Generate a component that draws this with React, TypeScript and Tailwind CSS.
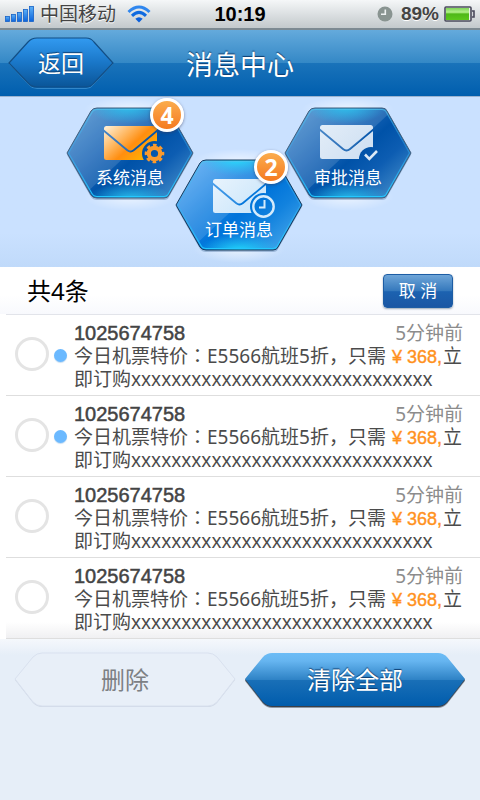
import type { ReactNode } from "react";

const HEX =
  "M1 46 L25 4 Q27 1 31 1 H98 Q102 1 103 4 L127 46 L103 88 Q102 91 98 91 H31 Q27 91 25 88 Z";
const HEX_INNER =
  "M2.5 46 L26.5 4.5 Q28 2.5 31 2.5 H98 Q100.5 2.5 102 4.5 L125.5 46 L102 87.5 Q100.5 89.5 98 89.5 H31 Q28 89.5 26.5 87.5 Z";

type Tab = {
  id: string;
  label: string;
  count?: number;
  active?: boolean;
  envelope: [number, number];
  cut: [number, number, number];
  badge: ReactNode;
};

const tabs: Tab[] = [
  {
    id: "system",
    label: "系统消息",
    count: 4,
    envelope: [38, 19],
    cut: [88.5, 46.5, 12.5],
    badge: (
      <g fill="none" stroke="#fb9a2c">
        <circle cx="88.5" cy="46.5" r="5.7" strokeWidth="4.2" />
        <circle cx="88.5" cy="46.5" r="8.4" strokeWidth="2.8" strokeDasharray="3.6 3" strokeDashoffset="1.8" />
      </g>
    ),
  },
  {
    id: "order",
    label: "订单消息",
    count: 2,
    active: true,
    envelope: [38, 20],
    cut: [88.5, 47.5, 13.5],
    badge: (
      <g fill="none" stroke="#d5ebfb" strokeWidth="2.4">
        <circle cx="88.5" cy="47.5" r="10.2" />
        <path d="M89.5 41 V48.5 H84" strokeWidth="2" />
      </g>
    ),
  },
  {
    id: "approval",
    label: "审批消息",
    envelope: [36, 18],
    cut: [87, 52, 12],
    badge: <path d="M81 47.5 L85.3 51.8 L93 44" fill="none" stroke="#dbe9f6" strokeWidth="2.6" />,
  },
];

function HexArt({ tab }: { tab: Tab }) {
  const { id, active, envelope, cut, badge } = tab;
  const [x, y] = envelope;
  const url = (name: string) => `url(#${id}-${name})`;
  return (
    <svg viewBox="0 0 128 92" className="absolute inset-0 h-full w-full overflow-visible" aria-hidden="true">
      <defs>
        <linearGradient id={`${id}-body`} x1="0" y1="0.1" x2="1" y2="0.9">
          <stop offset="0" stopColor={active ? "#5cacf4" : "#4f92cf"} />
          <stop offset="0.35" stopColor={active ? "#1f86e2" : "#1e68b8"} />
          <stop offset="0.55" stopColor={active ? "#0074da" : "#0052a8"} />
          <stop offset="0.72" stopColor={active ? "#1282de" : "#0d5db2"} />
          <stop offset="1" stopColor={active ? "#4aaaec" : "#4a92cc"} />
        </linearGradient>
        <radialGradient id={`${id}-glow`}>
          <stop offset="0" stopColor={active ? "#22e4ff" : "#2cc4ee"} stopOpacity="0.9" />
          <stop offset="1" stopColor="#22c8f8" stopOpacity="0" />
        </radialGradient>
        <radialGradient id={`${id}-halo`}>
          <stop offset="0" stopColor="#fff" stopOpacity="0.6" />
          <stop offset="1" stopColor="#fff" stopOpacity="0" />
        </radialGradient>
        <linearGradient id={`${id}-rim`} x1="0" y1="0" x2="0" y2="1">
          <stop offset="0" stopColor="#4fc4ee" stopOpacity="0.7" />
          <stop offset="0.4" stopColor="#3ab0f0" stopOpacity="0.4" />
          <stop offset="1" stopColor="#22c8ff" />
        </linearGradient>
        <linearGradient id={`${id}-paper`} x1="0" y1="0" x2="1" y2="0.7">
          {id === "system" ? (
            <>
              <stop offset="0" stopColor="#fff3dc" />
              <stop offset="0.4" stopColor="#ffb45a" />
              <stop offset="0.62" stopColor="#ff8e10" />
              <stop offset="1" stopColor="#ffb400" />
            </>
          ) : (
            <>
              <stop offset="0" stopColor={active ? "#e8f3fd" : "#e3edf8"} />
              <stop offset="1" stopColor={active ? "#cbe6fa" : "#cfe0f2"} />
            </>
          )}
        </linearGradient>
        <clipPath id={`${id}-clip`}>
          <path d={HEX} />
        </clipPath>
        <mask id={`${id}-mask`} maskUnits="userSpaceOnUse" x="0" y="0" width="128" height="92">
          <rect width="128" height="92" fill="#fff" />
          <path
            d={`M${x - 1} ${y + 4} L${x + 23} ${y + 24} Q${x + 26.5} ${y + 27} ${x + 30} ${y + 24} L${x + 54} ${y + 4}`}
            fill="none"
            stroke="#000"
            strokeWidth="1.8"
          />
          <circle cx={cut[0]} cy={cut[1]} r={cut[2]} fill="#000" />
        </mask>
      </defs>
      <ellipse cx="64" cy="2" rx="46" ry="12" fill={url("halo")} />
      <ellipse cx="64" cy="90" rx="46" ry="14" fill={url("halo")} />
      <path d={HEX} transform="translate(0 2)" fill="#3b6591" opacity="0.35" />
      <path d={HEX} fill={url("body")} />
      <g clipPath={url("clip")}>
        <path d="M0 0 H112 L18 88 L0 92 Z" fill="#fff" opacity="0.13" />
        <ellipse cx="62" cy="0" rx="40" ry="17" fill={url("glow")} />
        <ellipse cx="64" cy="92" rx="42" ry="17" fill={url("glow")} />
      </g>
      <path d={HEX_INNER} fill="none" stroke={url("rim")} strokeWidth="1.2" />
      <path d={HEX} fill="none" stroke={active ? "#153a5c" : "#41607e"} strokeWidth="1" />
      <rect x={x} y={y} width="53" height="34" rx="2.5" fill={url("paper")} mask={url("mask")} />
      {badge}
    </svg>
  );
}

function TabButton({ tab, className }: { tab: Tab; className: string }) {
  return (
    <button
      type="button"
      className={`relative h-[92px] w-32 shrink-0 pt-[50px] text-center text-[17px] leading-6 text-white ${className}`}
    >
      <HexArt tab={tab} />
      <span className="relative block">{tab.label}</span>
      {tab.count && (
        <span
          className={`absolute -top-[9px] flex size-[34px] items-center justify-center rounded-full border-[3px] border-white bg-linear-to-b from-[#fbac4c] to-[#f47a20] font-['Open_Sans','Noto_Sans',sans-serif] text-[23px] leading-none font-bold shadow-[0_1px_3px_rgba(60,60,90,0.6)] ${
            tab.active ? "left-[79px]" : "left-[84px]"
          }`}
        >
          {tab.count}
        </span>
      )}
    </button>
  );
}

const messages = [
  { id: 1, unread: true },
  { id: 2, unread: true },
  { id: 3, unread: false },
  { id: 4, unread: false },
];

function Message({ id, unread }: { id: number; unread: boolean }) {
  return (
    <li className="flex items-center border-b border-[#dedede] pt-[7px] pr-[17px] pb-1 pl-[9px]">
      <input
        id={`message-${id}`}
        type="checkbox"
        className="mb-[6px] size-[34px] shrink-0 appearance-none rounded-full border-3 border-[#e4e4e4] bg-white checked:bg-[#6bb8fb]"
      />
      <span
        className={`mr-[7px] mb-[2px] ml-[5px] size-[13px] shrink-0 rounded-full ${
          unread ? "bg-[#6bb9ff] shadow-[0_1px_1px_#c5dcf0]" : ""
        }`}
      />
      <label htmlFor={`message-${id}`} className="block min-w-0 flex-1 text-[19px] leading-[23px] text-[#4b4b4b]">
        <span className="flex justify-between">
          <span className="font-['Liberation_Sans',sans-serif] text-[20px] text-[#444] [-webkit-text-stroke:0.5px_#444]">
            1025674758
          </span>
          <span className="text-[#8c8c8c]">5分钟前</span>
        </span>
        <span className="block">
          今日机票特价<span className="font-['Noto_Sans','Noto_Sans_CJK_JP',sans-serif]">：</span>E5566航班5折，只需
          <span className="mr-px ml-[6px] font-['Liberation_Sans',sans-serif] text-[18px] leading-none text-[#ff921e] [-webkit-text-stroke:0.4px_#ff921e]">
            ¥&nbsp;368,
          </span>
          立
        </span>
        <span className="block">即订购xxxxxxxxxxxxxxxxxxxxxxxxxxxxxx</span>
      </label>
    </li>
  );
}

function StatusBar() {
  return (
    <div className="grid h-[30px] grid-cols-[1fr_auto_1fr] items-center border-b-2 border-[#7d8a92] bg-linear-to-b from-[#f5f7f8] to-[#c3c9cc] px-[5px] font-['Liberation_Sans','Noto_Sans_CJK_SC',sans-serif]">
      <div className="flex items-center">
        <svg viewBox="0 0 29 16" className="mr-[6px] h-4 w-[29px]" aria-hidden="true">
          <defs>
            <linearGradient id="signal" x1="0" y1="0" x2="0" y2="1">
              <stop offset="0" stopColor="#5cb0f6" />
              <stop offset="1" stopColor="#0a63dc" />
            </linearGradient>
          </defs>
          <g fill="url(#signal)" stroke="#1662c8" strokeWidth="0.8">
            <rect x="0.5" y="10.5" width="4" height="5" />
            <rect x="6.5" y="8.5" width="4" height="7" />
            <rect x="12.5" y="6.5" width="4" height="9" />
            <rect x="18.5" y="3.5" width="4" height="12" />
            <rect x="24.5" y="0.5" width="4" height="15" />
          </g>
        </svg>
        <span className="pt-[2px] text-[19px] leading-6 text-[#444] [text-shadow:0_1px_0_#fff]">中国移动</span>
        <svg viewBox="0 0 24 18" className="ml-[11px] h-[18px] w-6" aria-hidden="true">
          <g fill="none" stroke="#0f6ae0" strokeWidth="3">
            <path d="M1.5 7 Q12 -3 22.5 7" stroke="#2f86ee" />
            <path d="M5 10.8 Q12 4 19 10.8" />
          </g>
          <path d="M12 17.5 L8.3 13.8 Q12 10.8 15.7 13.8 Z" fill="#0a5fdc" />
        </svg>
      </div>
      <span className="text-[20px] leading-6 font-bold text-black">10:19</span>
      <div className="flex items-center justify-end">
        <svg viewBox="0 0 16 16" className="mr-2 size-4" aria-hidden="true">
          <circle cx="8" cy="8" r="7.5" fill="#899491" />
          <path d="M8.3 3.5 V8.3 H4" fill="none" stroke="#eef1f2" strokeWidth="1.6" />
        </svg>
        <span className="mr-[5px] text-[19px] leading-6 font-bold text-[#444] [text-shadow:0_1px_0_#fff]">89%</span>
        <svg viewBox="0 0 31 16" className="h-4 w-[31px]" aria-hidden="true">
          <defs>
            <linearGradient id="battery" x1="0" y1="0" x2="0" y2="1">
              <stop offset="0" stopColor="#7fd35a" />
              <stop offset="0.35" stopColor="#b4f28a" />
              <stop offset="0.5" stopColor="#4fb818" />
              <stop offset="1" stopColor="#5cc81c" />
            </linearGradient>
          </defs>
          <rect x="1" y="1" width="26" height="14" rx="1" fill="#e8f4e4" stroke="#4a4a5c" strokeWidth="1.6" />
          <rect x="2" y="2" width="23" height="12" fill="url(#battery)" />
          <path d="M28 5 H30 V11 H28" fill="#d5d9dc" stroke="#4a4a5c" strokeWidth="1.6" />
        </svg>
      </div>
    </div>
  );
}

function Header() {
  return (
    <header className="grid h-[66px] grid-cols-[1fr_auto_1fr] items-center bg-[linear-gradient(#64aadc_0%,#3488c6_50%,#1a73ba_50%,#005eae_100%)] px-2">
      <button
        type="button"
        className="relative h-[52px] w-[106px] text-[23px] leading-8 text-white [text-shadow:0_-1px_1px_#0d3d70]"
      >
        <svg viewBox="0 0 106 52" className="absolute inset-0 h-full w-full" aria-hidden="true">
          <defs>
            <linearGradient id="back" x1="0" y1="0" x2="0" y2="1">
              <stop offset="0" stopColor="#329af0" />
              <stop offset="0.5" stopColor="#1a77c8" />
              <stop offset="1" stopColor="#0a5598" />
            </linearGradient>
          </defs>
          <path
            d="M1.5 26 L20 5 Q23.5 1.5 29 1.5 H78 Q83 1.5 86 5 L104.5 26 L86 46 Q83 50.5 78 50.5 H29 Q23.5 50.5 20 46 Z"
            fill="none"
            stroke="#4fa0dc"
            strokeWidth="1"
            transform="translate(0 1)"
            opacity="0.6"
          />
          <path
            d="M1 26 L20 5 Q23.5 1 29 1 H78 Q83 1 86 5 L105 26 L86 46 Q83 50 78 50 H29 Q23.5 50 20 46 Z"
            fill="url(#back)"
            stroke="#134f86"
            strokeWidth="1.2"
          />
        </svg>
        <span className="relative">返回</span>
      </button>
      <h1 className="pt-1 text-[27px] leading-10 text-white [text-shadow:0_-1px_1px_#0d3d70]">消息中心</h1>
    </header>
  );
}

const WIDE_HEX =
  "M1 27 L19 5 Q23 1 28 1 H194 Q199 1 203 5 L221 27 L203 50 Q199 54 194 54 H28 Q23 54 19 50 Z";

function Footer() {
  return (
    <footer className="grid grid-cols-2 gap-2 bg-[linear-gradient(#f5f8fc_0px,#e6eef8_16px)] px-[14px] pt-[13px] text-[24px] leading-[54px]">
      <button type="button" className="relative h-14 text-[#7d8084]">
        <svg viewBox="0 0 222 56" preserveAspectRatio="none" className="absolute inset-0 h-full w-full" aria-hidden="true">
          <path d={WIDE_HEX} transform="translate(0 1)" fill="#cfd7e4" />
          <path d={WIDE_HEX} fill="#e8eff8" stroke="#d9e1ef" strokeWidth="1" />
        </svg>
        <span className="relative">删除</span>
      </button>
      <button type="button" className="relative h-14 text-white [text-shadow:0_-1px_1px_#0d3d70]">
        <svg viewBox="0 0 222 56" preserveAspectRatio="none" className="absolute inset-0 h-full w-full" aria-hidden="true">
          <defs>
            <linearGradient id="clear" x1="0" y1="0" x2="0" y2="1">
              <stop offset="0" stopColor="#6cbcf6" />
              <stop offset="0.15" stopColor="#66b5f0" />
              <stop offset="0.5" stopColor="#2f83c6" />
              <stop offset="0.5" stopColor="#1a70b8" />
              <stop offset="1" stopColor="#005cac" />
            </linearGradient>
          </defs>
          <path d={WIDE_HEX} transform="translate(0 2)" fill="#8d98a5" />
          <path d={WIDE_HEX} transform="translate(0 1)" fill="#3a3f48" />
          <path d={WIDE_HEX} fill="url(#clear)" />
        </svg>
        <span className="relative">清除全部</span>
      </button>
    </footer>
  );
}

export default function App() {
  return (
    <div className="min-h-screen bg-[#e6eef8] font-['Noto_Sans','Noto_Sans_CJK_SC',sans-serif]">
      <StatusBar />
      <Header />
      <nav className="flex h-[171px] items-start justify-center border-t border-[#9cb3d0] bg-linear-to-b from-[#cae1ff] from-80% to-[#c0dafa] pt-[10px] pr-[2px]">
        <TabButton tab={tabs[0]} className="z-10" />
        <TabButton tab={tabs[1]} className="z-20 mt-[52px] -ml-[19px]" />
        <TabButton tab={tabs[2]} className="-ml-[19px]" />
      </nav>
      <main className="bg-white">
        <div className="flex h-[47px] items-center justify-between bg-linear-to-b from-white from-60% to-[#f8f9fd] px-[27px]">
          <h2 className="text-[24px] leading-8 text-black">共4条</h2>
          <button
            type="button"
            className="h-[34px] w-[70px] rounded-[4px] border border-[#1d5da4] bg-[linear-gradient(#6ea5d8_0%,#3478bc_50%,#1c62b0_52%,#1a57a4_100%)] text-[17px] leading-8 text-white shadow-[0_1px_2px_#9aa8b8]"
          >
            取 消
          </button>
        </div>
        <ul className="ml-[6px] border-t border-[#e2e4ea] [&>li:last-child]:bg-linear-to-b [&>li:last-child]:from-white [&>li:last-child]:from-80% [&>li:last-child]:to-[#f0f0f2]">
          {messages.map((message) => (
            <Message key={message.id} {...message} />
          ))}
        </ul>
      </main>
      <Footer />
    </div>
  );
}
